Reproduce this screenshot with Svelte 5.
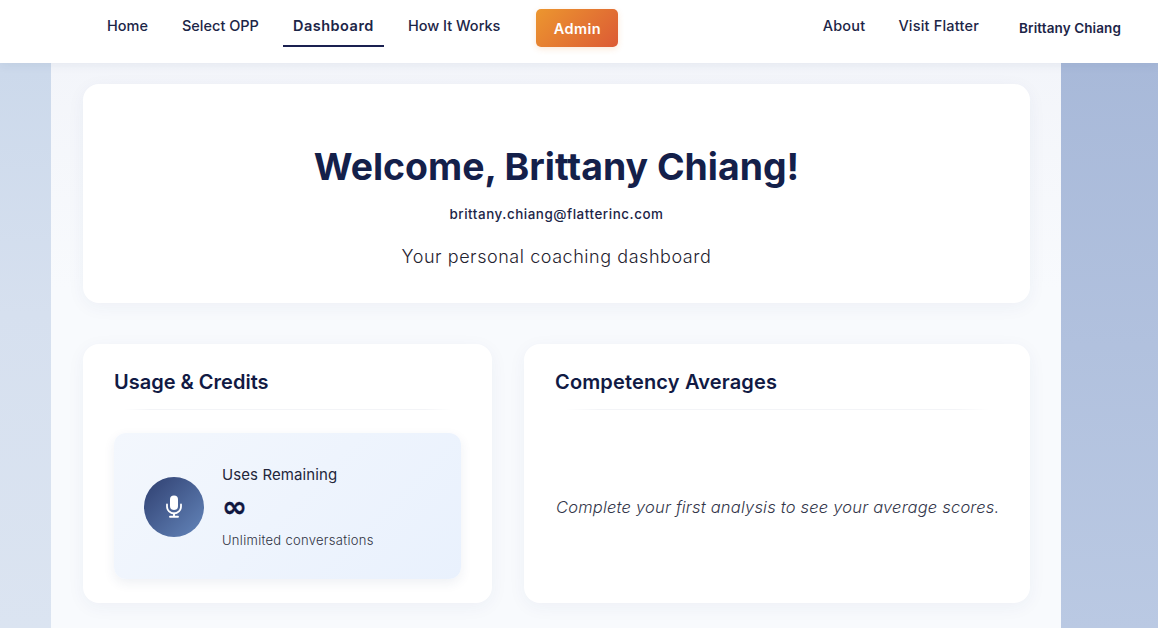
<script>
  const leftLinks = [
    { label: 'Home' },
    { label: 'Select OPP' },
    { label: 'Dashboard', active: true },
    { label: 'How It Works' }
  ];
  const rightLinks = ['About', 'Visit Flatter'];
</script>

<div class="shell">
  <header class="topbar">
    <nav class="nav-left">
      {#each leftLinks as link}
        <a class="link" class:active={link.active} href="#top">{link.label}</a>
      {/each}
    </nav>
    <button class="admin">Admin</button>
    <nav class="nav-right">
      {#each rightLinks as link}
        <a class="link" href="#top">{link}</a>
      {/each}
    </nav>
    <span class="user">Brittany Chiang</span>
  </header>

  <main class="page">
    <section class="card hero">
      <h1>Welcome, Brittany Chiang!</h1>
      <p class="email">brittany.chiang@flatterinc.com</p>
      <p class="tag">Your personal coaching dashboard</p>
    </section>

    <div class="grid">
      <section class="card panel">
        <h2>Usage &amp; Credits</h2>
        <div class="rule"></div>
        <div class="uses">
          <div class="mic">
            <svg width="16" height="23" viewBox="0 0 16 23" fill="none" aria-hidden="true">
              <rect x="4" y="0.5" width="8" height="14.5" rx="4" fill="#fff" />
              <path d="M1 9.5v2a7 7 0 0 0 14 0v-2" stroke="#fff" stroke-width="1.8" stroke-linecap="round" />
              <path d="M8 18.5v3M4 21.8h8" stroke="#fff" stroke-width="1.9" stroke-linecap="round" />
            </svg>
          </div>
          <div class="uses-text">
            <div class="uses-label">Uses Remaining</div>
            <div class="uses-value">∞</div>
            <div class="uses-note">Unlimited conversations</div>
          </div>
        </div>
      </section>

      <section class="card panel">
        <h2 class="wide">Competency Averages</h2>
        <div class="rule"></div>
        <div class="empty">Complete your first analysis to see your average scores.</div>
      </section>
    </div>
  </main>
</div>

<style>
  :global(body) {
    margin: 0;
    overflow: hidden;
  }
  .shell {
    height: 628px;
    overflow: hidden;
    font-family: Inter, "Noto Sans", sans-serif;
    color: #14204a;
    background: linear-gradient(180deg, #c9d7ea, #d6e0ef 50%, #dbe4f1);
    position: relative;
  }
  .shell::after {
    content: "";
    position: absolute;
    inset: 63px 0 0 1061px;
    background: linear-gradient(180deg, #a8b9d9, #bac9e3);
  }
  .topbar {
    position: relative;
    z-index: 2;
    height: 63px;
    box-sizing: border-box;
    background: #fff;
    display: flex;
    align-items: flex-start;
    padding-left: 97px;
    box-shadow: 0 2px 10px rgba(30, 50, 100, 0.07);
  }
  .nav-left,
  .nav-right {
    display: flex;
    gap: 14px;
  }
  .nav-right {
    gap: 13px;
    margin-left: auto;
  }
  .link {
    display: block;
    height: 47px;
    box-sizing: border-box;
    padding: 16px 10px 0;
    font-size: 14.5px;
    line-height: 20px;
    font-weight: 500;
    color: #1c2547;
    text-decoration: none;
    white-space: nowrap;
  }
  .nav-right .link {
    letter-spacing: 0.2px;
  }
  .link.active {
    font-weight: 600;
    letter-spacing: 0.5px;
    border-bottom: 2px solid #1a2050;
  }
  .admin {
    margin: 9px 0 0 26px;
    width: 82px;
    height: 38px;
    border: 0;
    border-radius: 5px;
    font: 600 14.5px Inter, sans-serif;
    letter-spacing: 0.4px;
    color: #fff;
    background: linear-gradient(135deg, #ec962f, #dc5a35);
    box-shadow: 0 2px 6px rgba(236, 140, 60, 0.2);
  }
  .user {
    margin: 19px 37px 0 30px;
    font-size: 13.5px;
    line-height: 18px;
    letter-spacing: 0.1px;
    font-weight: 600;
    color: #1c2547;
    white-space: nowrap;
  }
  .page {
    position: relative;
    z-index: 1;
    box-sizing: border-box;
    width: 1010px;
    height: 565px;
    margin-left: 51px;
    padding: 21px 31px 0 32px;
    background: linear-gradient(180deg, #f3f5fa, #f8fafd 40%, #f8fafd);
  }
  .card {
    background: #fff;
    border-radius: 16px;
    box-shadow: 0 4px 18px rgba(40, 60, 120, 0.05);
  }
  .hero {
    height: 219px;
    box-sizing: border-box;
    padding-top: 60px;
    text-align: center;
  }
  h1 {
    margin: 0;
    font-size: 37.4px;
    line-height: 46px;
    font-weight: 700;
    color: #14204a;
  }
  .email {
    margin: 15px 0 0;
    font-size: 13.4px;
    line-height: 18px;
    letter-spacing: 0.55px;
    font-weight: 500;
    color: #1c2547;
  }
  .tag {
    margin: 23px 0 0;
    font-size: 18px;
    line-height: 22px;
    letter-spacing: 0.55px;
    font-weight: 300;
    color: #1f2330;
  }
  .grid {
    display: grid;
    grid-template-columns: 409px 506px;
    gap: 32px;
    margin-top: 41px;
  }
  .panel {
    height: 259px;
    box-sizing: border-box;
    padding: 26px 31px 0 31px;
    position: relative;
  }
  h2 {
    margin: 0;
    font-size: 20px;
    line-height: 24px;
    font-weight: 600;
    color: #111a44;
  }
  h2.wide {
    letter-spacing: 0.15px;
  }
  .rule {
    height: 1px;
    margin: 15px 10px 0;
    background: linear-gradient(90deg, transparent, #f3f4f7 8%, #f3f4f7 92%, transparent);
  }
  .uses {
    margin-top: 23px;
    height: 146px;
    display: flex;
    align-items: center;
    gap: 19px;
    padding-left: 30px;
    border-radius: 12px;
    background: linear-gradient(135deg, #f3f7fd, #e9f1fd);
    box-shadow: 0 4px 12px rgba(40, 60, 120, 0.08);
  }
  .mic {
    width: 60px;
    height: 60px;
    margin-top: 2px;
    border-radius: 50%;
    background: linear-gradient(135deg, #2f3f70, #6486bb);
    display: flex;
    align-items: center;
    justify-content: center;
    padding-bottom: 2px;
    box-sizing: border-box;
  }
  .uses-text {
    margin-top: 2px;
    margin-left: -1px;
  }
  .uses-label {
    font-size: 15px;
    line-height: 20px;
    letter-spacing: 0.1px;
    font-weight: 400;
    color: #23263a;
  }
  .uses-value {
    font-size: 30px;
    line-height: 26px;
    margin-top: 9px;
    font-weight: 700;
    color: #0f1640;
    font-family: "DejaVu Sans", sans-serif;
    -webkit-text-stroke: 0.4px #0f1640;
  }
  .uses-note {
    margin-top: 11px;
    font-size: 13px;
    line-height: 18px;
    letter-spacing: 0.3px;
    font-weight: 300;
    color: #2f3242;
  }
  .empty {
    margin-top: 86px;
    padding-left: 1px;
    font-size: 16.5px;
    line-height: 22px;
    letter-spacing: 0.2px;
    font-style: italic;
    font-weight: 300;
    color: #33364a;
    white-space: nowrap;
  }
</style>
